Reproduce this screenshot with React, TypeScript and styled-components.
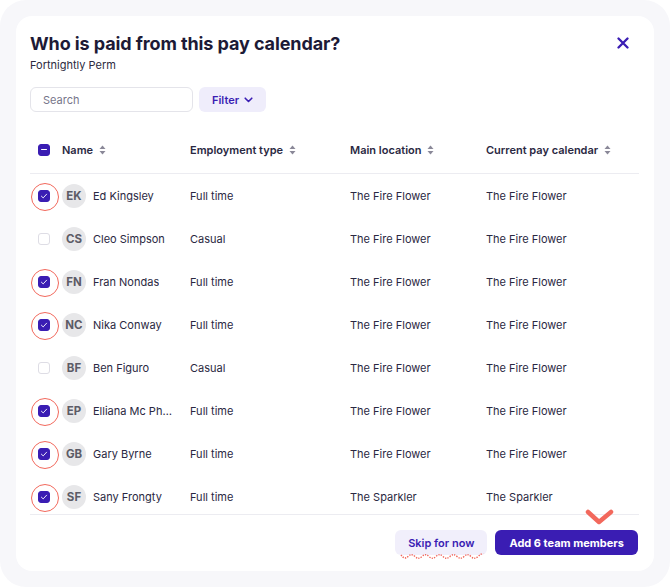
import React from "react";
import styled, { createGlobalStyle } from "styled-components";

const PURPLE = "#3a1db3";
const INK = "#22203a";
const CORAL = "#f2685c";

const GlobalStyle = createGlobalStyle`
  html, body {
    margin: 0;
    padding: 0;
    background: #ffffff;
  }
  body {
    font-family: Inter, "Noto Sans", "Liberation Sans", sans-serif;
    color: ${INK};
    -webkit-font-smoothing: antialiased;
  }
  * { box-sizing: border-box; }
`;

interface Member {
  initials: string;
  name: string;
  type: string;
  location: string;
  calendar: string;
  checked: boolean;
}

const members: Member[] = [
  { initials: "EK", name: "Ed Kingsley", type: "Full time", location: "The Fire Flower", calendar: "The Fire Flower", checked: true },
  { initials: "CS", name: "Cleo Simpson", type: "Casual", location: "The Fire Flower", calendar: "The Fire Flower", checked: false },
  { initials: "FN", name: "Fran Nondas", type: "Full time", location: "The Fire Flower", calendar: "The Fire Flower", checked: true },
  { initials: "NC", name: "Nika Conway", type: "Full time", location: "The Fire Flower", calendar: "The Fire Flower", checked: true },
  { initials: "BF", name: "Ben Figuro", type: "Casual", location: "The Fire Flower", calendar: "The Fire Flower", checked: false },
  { initials: "EP", name: "Elliana Mc Phee", type: "Full time", location: "The Fire Flower", calendar: "The Fire Flower", checked: true },
  { initials: "GB", name: "Gary Byrne", type: "Full time", location: "The Fire Flower", calendar: "The Fire Flower", checked: true },
  { initials: "SF", name: "Sany Frongty", type: "Full time", location: "The Sparkler", calendar: "The Sparkler", checked: true },
];

const SortIcon = () => (
  <svg width="7" height="10" viewBox="0 0 7 10">
    <path d="M3.5 0.5 L6.5 4 H0.5 Z" fill="#8a8898" />
    <path d="M3.5 9.5 L6.5 6 H0.5 Z" fill="#8a8898" />
  </svg>
);

const CheckMark = () => (
  <svg width="8" height="8" viewBox="0 0 8 8">
    <path d="M1.4 4.2 L3.2 5.9 L6.6 2.2" fill="none" stroke="#ffffff" strokeWidth="0.9" strokeLinecap="round" strokeLinejoin="round" />
  </svg>
);

const App = () => (
  <>
    <GlobalStyle />
    <Backdrop>
      <Card>
        <Head>
          <div>
            <Title>Who is paid from this pay calendar?</Title>
            <Subtitle>Fortnightly Perm</Subtitle>
          </div>
          <CloseButton aria-label="Close">
            <svg width="12" height="12" viewBox="0 0 12 12">
              <path d="M1.5 1.5 L10.5 10.5 M10.5 1.5 L1.5 10.5" stroke={PURPLE} strokeWidth="2.3" strokeLinecap="round" />
            </svg>
          </CloseButton>
        </Head>

        <Toolbar>
          <SearchInput placeholder="Search" />
          <FilterButton>
            Filter
            <svg width="9" height="6" viewBox="0 0 9 6">
              <path d="M1.2 1.2 L4.5 4.5 L7.8 1.2" fill="none" stroke={PURPLE} strokeWidth="1.6" strokeLinecap="round" strokeLinejoin="round" />
            </svg>
          </FilterButton>
        </Toolbar>

        <HeaderRow>
          <CheckCell>
            <Box $checked>
              <Dash />
            </Box>
          </CheckCell>
          <HeadCell>Name <SortIcon /></HeadCell>
          <HeadCell>Employment type <SortIcon /></HeadCell>
          <HeadCell>Main location <SortIcon /></HeadCell>
          <HeadCell>Current pay calendar <SortIcon /></HeadCell>
        </HeaderRow>

        <List>
          {members.map((m) => (
            <Row key={m.initials}>
              <CheckCell>
                <Box $checked={m.checked} $ringed={m.checked}>
                  {m.checked && <CheckMark />}
                </Box>
              </CheckCell>
              <NameCell>
                <Avatar>{m.initials}</Avatar>
                <Name>{m.name}</Name>
              </NameCell>
              <Cell>{m.type}</Cell>
              <Cell>{m.location}</Cell>
              <Cell>{m.calendar}</Cell>
            </Row>
          ))}
        </List>

        <Footer>
          <SkipButton>
            Skip for now
            <Squiggle width="84" height="9" viewBox="0 0 84 9">
              <path
                d="M1 3 Q4.5 8 8 4.5 T15 4.5 T22 4.5 T29 4.5 T36 4.5 T43 4.5 T50 4.5 T57 4.5 T64 4.5 T71 4.5 T78 4.5 T83 2"
                fill="none"
                stroke={CORAL}
                strokeWidth="1.4"
                strokeDasharray="1.3 1.2"
              />
            </Squiggle>
          </SkipButton>
          <PrimaryButton>
            Add 6 team members
            <Pointer width="30" height="18" viewBox="0 0 30 18">
              <path d="M3 3 L14 13 L26 3" fill="none" stroke={CORAL} strokeWidth="4.5" strokeLinecap="round" strokeLinejoin="round" />
            </Pointer>
          </PrimaryButton>
        </Footer>
      </Card>
    </Backdrop>
  </>
);

const Backdrop = styled.div`
  width: 670px;
  height: 587px;
  padding: 16px;
  background: #f7f7fa;
  border-radius: 26px;
`;

const Card = styled.div`
  display: flex;
  flex-direction: column;
  width: 638px;
  height: 555px;
  padding: 16px 15px 16px 14px;
  background: #ffffff;
  border-radius: 16px;
`;

const Head = styled.div`
  display: flex;
  justify-content: space-between;
  align-items: flex-start;
`;

const Title = styled.h1`
  margin: 0;
  font-size: 18px;
  line-height: 24px;
  font-weight: 700;
  color: #1d1a36;
  letter-spacing: -0.1px;
`;

const Subtitle = styled.div`
  margin-top: 1px;
  font-size: 11px;
  line-height: 16px;
  color: #2c2a40;
`;

const CloseButton = styled.button`
  display: flex;
  align-items: center;
  justify-content: center;
  width: 20px;
  height: 20px;
  margin: 1px 6px 0 0;
  padding: 0;
  border: none;
  background: transparent;
  cursor: pointer;
`;

const Toolbar = styled.div`
  display: flex;
  align-items: center;
  gap: 6px;
  margin-top: 14px;
`;

const SearchInput = styled.input`
  width: 163px;
  height: 25px;
  padding: 0 12px;
  border: 1px solid #e4e4ea;
  border-radius: 6px;
  font-family: inherit;
  font-size: 11px;
  color: ${INK};
  outline: none;
  &::placeholder {
    color: #77758a;
  }
`;

const FilterButton = styled.button`
  display: flex;
  align-items: center;
  gap: 5px;
  height: 25px;
  padding: 0 13px;
  border: none;
  border-radius: 6px;
  background: #efedfb;
  color: ${PURPLE};
  font-family: inherit;
  font-size: 11px;
  font-weight: 600;
  cursor: pointer;
`;

const grid = `
  display: grid;
  grid-template-columns: 32px 128px 160px 136px 1fr;
  align-items: center;
`;

const HeaderRow = styled.div`
  ${grid}
  height: 48px;
  margin-top: 14px;
  border-bottom: 1px solid #ececf1;
`;

const HeadCell = styled.div`
  display: flex;
  align-items: center;
  gap: 6px;
  font-size: 11px;
  font-weight: 600;
  color: #2a2842;
`;

const List = styled.div`
  flex: 1;
  overflow: hidden;
  border-bottom: 1px solid #ececf1;
`;

const Row = styled.div`
  ${grid}
  height: 43px;
`;

const CheckCell = styled.div`
  display: flex;
  align-items: center;
  padding-left: 8px;
`;

const Box = styled.div<{ $checked?: boolean; $ringed?: boolean }>`
  position: relative;
  display: flex;
  align-items: center;
  justify-content: center;
  width: 12px;
  height: 12px;
  border-radius: 3px;
  background: ${(p) => (p.$checked ? PURPLE : "#ffffff")};
  border: 1px solid ${(p) => (p.$checked ? PURPLE : "#dedde5")};

  &::after {
    content: "";
    display: ${(p) => (p.$ringed ? "block" : "none")};
    position: absolute;
    left: 50%;
    top: 50%;
    width: 26px;
    height: 26px;
    margin: -13px 0 0 -13px;
    border: 1.5px solid ${CORAL};
    border-radius: 50%;
  }
`;

const Dash = styled.span`
  width: 6px;
  height: 1.6px;
  border-radius: 1px;
  background: #ffffff;
`;

const NameCell = styled.div`
  display: flex;
  align-items: center;
  gap: 7px;
  min-width: 0;
`;

const Avatar = styled.div`
  flex: none;
  display: flex;
  align-items: center;
  justify-content: center;
  width: 24px;
  height: 24px;
  border-radius: 50%;
  background: #e7e7e9;
  color: #5c5b66;
  font-size: 11.5px;
  font-weight: 700;
`;

const Name = styled.span`
  max-width: 80px;
  overflow: hidden;
  white-space: nowrap;
  text-overflow: ellipsis;
  font-size: 11px;
  color: #2a2842;
`;

const Cell = styled.div`
  font-size: 11px;
  color: #2a2842;
  white-space: nowrap;
`;

const Footer = styled.div`
  display: flex;
  justify-content: flex-end;
  gap: 8px;
  padding-top: 15px;
  padding-right: 1px;
`;

const SkipButton = styled.button`
  position: relative;
  height: 25px;
  padding: 0 13px;
  border: none;
  border-radius: 6px;
  background: #f1effb;
  color: ${PURPLE};
  font-family: inherit;
  font-size: 11px;
  font-weight: 600;
  cursor: pointer;
`;

const Squiggle = styled.svg`
  position: absolute;
  left: 5px;
  top: 22px;
`;

const PrimaryButton = styled.button`
  position: relative;
  height: 25px;
  padding: 0 14px;
  border: none;
  border-radius: 6px;
  background: ${PURPLE};
  color: #ffffff;
  font-family: inherit;
  font-size: 11px;
  font-weight: 700;
  cursor: pointer;
`;

const Pointer = styled.svg`
  position: absolute;
  left: 90px;
  top: -21px;
`;

export default App;
